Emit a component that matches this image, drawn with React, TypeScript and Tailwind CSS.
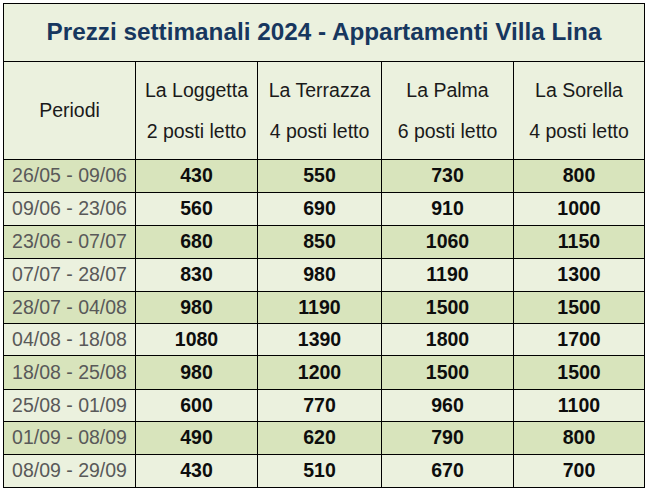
import React from "react";

const rows: [string, string, string, string, string, string][] = [
  ["26/05 - 09/06", "430", "550", "730", "800", "dark"],
  ["09/06 - 23/06", "560", "690", "910", "1000", "light"],
  ["23/06 - 07/07", "680", "850", "1060", "1150", "dark"],
  ["07/07 - 28/07", "830", "980", "1190", "1300", "light"],
  ["28/07 - 04/08", "980", "1190", "1500", "1500", "dark"],
  ["04/08 - 18/08", "1080", "1390", "1800", "1700", "light"],
  ["18/08 - 25/08", "980", "1200", "1500", "1500", "dark"],
  ["25/08 - 01/09", "600", "770", "960", "1100", "light"],
  ["01/09 - 08/09", "490", "620", "790", "800", "dark"],
  ["08/09 - 29/09", "430", "510", "670", "700", "light"],
];

const heads: [string, string][] = [
  ["La Loggetta", "2 posti letto"],
  ["La Terrazza", "4 posti letto"],
  ["La Palma", "6 posti letto"],
  ["La Sorella", "4 posti letto"],
];

export default function App() {
  return (
    <div
      className="bg-white w-[649px] h-[492px] pl-[3px] pt-[3px]"
      style={{ fontFamily: '"Liberation Sans", Arial, sans-serif' }}
    >
      <div className="grid w-[642px] bg-black p-px gap-px grid-cols-[131px_121px_123px_131px_130px] grid-rows-[57px_97px_32px_32px_32px_32px_31px_31px_33px_31px_32px_32px]">
        <div className="col-span-5 bg-[#ebf1de] flex items-center justify-center text-[24.3px] font-bold text-[#17375e]">
          Prezzi settimanali 2024 - Appartamenti Villa Lina
        </div>
        <div className="bg-[#ebf1de] flex items-center justify-center text-[19.5px] text-[#1a1a1a]">
          Periodi
        </div>
        {heads.map(([a, b]) => (
          <div
            key={a}
            className="bg-[#ebf1de] flex flex-col items-center justify-center gap-[19px] text-[19.5px] leading-[22px] text-[#1a1a1a]"
          >
            <span>{a}</span>
            <span>{b}</span>
          </div>
        ))}
        {rows.map((r) => {
          const bg = r[5] === "dark" ? "bg-[#d8e4bc]" : "bg-[#ebf1de]";
          return (
            <React.Fragment key={r[0]}>
              <div className={`${bg} flex items-center justify-center text-[19.5px] text-[#595959]`}>
                {r[0]}
              </div>
              {r.slice(1, 5).map((v, i) => (
                <div
                  key={i}
                  className={`${bg} flex items-center justify-center text-[19.5px] font-bold text-[#0d0d0d]`}
                >
                  {v}
                </div>
              ))}
            </React.Fragment>
          );
        })}
      </div>
    </div>
  );
}
